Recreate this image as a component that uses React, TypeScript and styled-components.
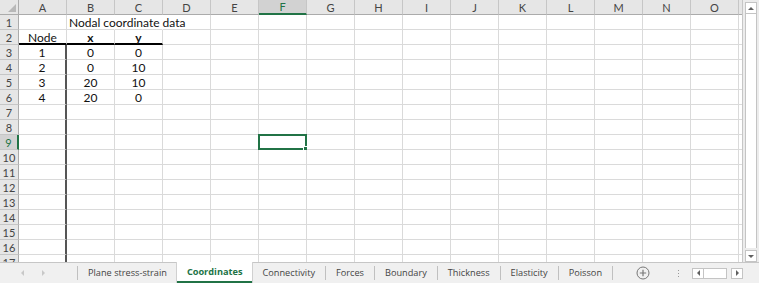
import React from "react";
import styled, { createGlobalStyle, css } from "styled-components";

const GREEN = "#217346";
const COLS = ["A", "B", "C", "D", "E", "F", "G", "H", "I", "J", "K", "L", "M", "N", "O", "P"];
const ROWS = Array.from({ length: 17 }, (_, i) => i + 1);

type CellData = { text: string; align?: "left" | "center"; bold?: boolean };
const DATA: Record<string, CellData> = {
  B1: { text: "Nodal coordinate data", align: "left" },
  A2: { text: "Node" },
  B2: { text: "x", bold: true },
  C2: { text: "y", bold: true },
  A3: { text: "1" }, B3: { text: "0" }, C3: { text: "0" },
  A4: { text: "2" }, B4: { text: "0" }, C4: { text: "10" },
  A5: { text: "3" }, B5: { text: "20" }, C5: { text: "10" },
  A6: { text: "4" }, B6: { text: "20" }, C6: { text: "0" },
};

const TABS = ["Plane stress-strain", "Coordinates", "Connectivity", "Forces", "Boundary", "Thickness", "Elasticity", "Poisson"];
const ACTIVE_TAB = 1;

const Global = createGlobalStyle`
  html, body { margin: 0; padding: 0; background: #fff; }
  body { width: 759px; height: 283px; overflow: hidden; }
  * { box-sizing: border-box; }
`;

const Window = styled.div`
  width: 759px;
  height: 283px;
  display: flex;
  flex-direction: column;
  overflow: hidden;
  background: #fff;
`;

const Main = styled.div`
  display: flex;
  height: 262px;
`;

const Sheet = styled.div`
  width: 743px;
  height: 262px;
  overflow: hidden;
  border-right: 1px solid #c6c6c6;
`;

const Grid = styled.div`
  display: grid;
  grid-template-columns: 19px repeat(16, 48px);
  grid-auto-rows: 15px;
  font-family: Lato, "Liberation Sans", sans-serif;
  font-size: 12px;
  color: #111;
`;

const Corner = styled.div`
  background: #e6e6e6;
  border-right: 1px solid #ababab;
  border-bottom: 1px solid #ababab;
  display: flex;
  align-items: flex-end;
  justify-content: flex-end;
  padding: 0 2px 2px 0;
`;

const ColHeader = styled.div<{ $active?: boolean }>`
  background: ${(p) => (p.$active ? "#d2d2d2" : "#e6e6e6")};
  color: ${(p) => (p.$active ? GREEN : "#444")};
  border-right: 1px solid #c6c6c6;
  border-bottom: ${(p) => (p.$active ? `2px solid ${GREEN}` : "1px solid #ababab")};
  display: flex;
  align-items: center;
  justify-content: center;
  font-size: 11px;
  line-height: 1;
`;

const RowHeader = styled.div<{ $active?: boolean }>`
  background: ${(p) => (p.$active ? "#d2d2d2" : "#e6e6e6")};
  color: ${(p) => (p.$active ? GREEN : "#444")};
  border-right: ${(p) => (p.$active ? `2px solid ${GREEN}` : "1px solid #ababab")};
  border-bottom: 1px solid #c6c6c6;
  display: flex;
  align-items: center;
  justify-content: center;
  padding-top: 1px;
  font-size: 11px;
  line-height: 1;
`;

const Cell = styled.div<{
  $align?: "left" | "center";
  $bold?: boolean;
  $thickBottom?: boolean;
  $thickRight?: boolean;
  $hideRight?: boolean;
}>`
  position: relative;
  border-right: 1px solid ${(p) => (p.$hideRight ? "transparent" : "#dadada")};
  border-bottom: 1px solid #dadada;
  display: flex;
  align-items: center;
  justify-content: ${(p) => (p.$align === "left" ? "flex-start" : "center")};
  padding: 1px 2px 0;
  white-space: nowrap;
  overflow: visible;
  line-height: 1;
  font-weight: ${(p) => (p.$bold ? 700 : 400)};
  ${(p) =>
    p.$thickBottom &&
    css`
      border-bottom: 2px solid #000;
      padding-top: 2px;
    `}
  ${(p) =>
    p.$thickRight &&
    css`
      border-right: 2px solid #555;
    `}
`;

const Selection = styled.div`
  position: absolute;
  top: -1px;
  left: -1px;
  right: -1px;
  bottom: -1px;
  border: 2px solid ${GREEN};
  pointer-events: none;
`;

const Handle = styled.div`
  position: absolute;
  right: -3px;
  bottom: -3px;
  width: 5px;
  height: 5px;
  background: ${GREEN};
  border: 1px solid #fff;
`;

const VScroll = styled.div`
  width: 16px;
  height: 262px;
  background: #ececec;
  display: flex;
  flex-direction: column;
  padding: 2px 2px 0 2px;
`;

const ScrollButton = styled.div`
  height: 12px;
  background: #fff;
  border: 1px solid #c4c4c4;
  display: flex;
  align-items: center;
  justify-content: center;
`;

const VTrack = styled.div`
  flex: 1;
  background: #fff;
  border-left: 1px solid #c4c4c4;
  border-right: 1px solid #c4c4c4;
  margin-bottom: 2px;
`;

const TabBar = styled.div`
  height: 21px;
  display: flex;
  align-items: stretch;
  background: #f0f0f0;
  border-top: 1px solid #c6c6c6;
  font-family: "Segoe UI", "Open Sans", "Noto Sans", sans-serif;
  font-size: 9.2px;
  color: #444;
`;

const NavArea = styled.div`
  width: 77px;
  display: flex;
  align-items: center;
  padding-left: 20px;
  gap: 16px;
`;

const Separator = styled.div`
  width: 1px;
  height: 14px;
  align-self: center;
  background: #c0c0c0;
`;

const Tab = styled.div<{ $active?: boolean }>`
  display: flex;
  align-items: center;
  padding: 0 10px 1px;
  white-space: nowrap;
  ${(p) =>
    p.$active &&
    css`
      background: #fff;
      color: ${GREEN};
      font-weight: 700;
      border-bottom: 2px solid ${GREEN};
      padding: 0 10px 0;
      margin-top: -1px;
      box-shadow: 1px 0 0 #d0d0d0, -1px 0 0 #d0d0d0;
    `}
`;

const AddButton = styled.div`
  margin-left: 23px;
  display: flex;
  align-items: center;
`;

const Dots = styled.div`
  margin-left: 28px;
  display: flex;
  flex-direction: column;
  justify-content: center;
  gap: 2px;
  span {
    width: 1px;
    height: 1px;
    background: #999;
  }
`;

const HScroll = styled.div`
  margin-left: 13px;
  display: flex;
  align-items: center;
`;

const HButton = styled.div`
  width: 12px;
  height: 11px;
  background: #fff;
  border: 1px solid #c4c4c4;
  display: flex;
  align-items: center;
  justify-content: center;
`;

const HTrack = styled.div`
  width: 23px;
  height: 11px;
  background: #fff;
  border-top: 1px solid #c4c4c4;
  border-bottom: 1px solid #c4c4c4;
  border-right: 1px solid #c4c4c4;
  margin-right: 4px;
`;

const Tri = ({ dir, color = "#606060", size = 5 }: { dir: "up" | "down" | "left" | "right"; color?: string; size?: number }) => {
  const pts = {
    up: "0,4 3,1 6,4",
    down: "0,1 3,4 6,1",
    left: "4,0 1,3 4,6",
    right: "1,0 4,3 1,6",
  }[dir];
  const w = dir === "up" || dir === "down" ? 6 : 5;
  const h = dir === "up" || dir === "down" ? 5 : 6;
  return (
    <svg width={w * (size / 5)} height={h * (size / 5)} viewBox={`0 0 ${w} ${h}`}>
      <polygon points={pts} fill={color} />
    </svg>
  );
};

export default function App() {
  const cells: React.ReactNode[] = [];
  cells.push(
    <Corner key="corner">
      <svg width="8" height="8" viewBox="0 0 8 8">
        <polygon points="8,0 8,8 0,8" fill="#b8b8b8" />
      </svg>
    </Corner>
  );
  COLS.forEach((c) =>
    cells.push(
      <ColHeader key={`h${c}`} $active={c === "F"}>
        {c}
      </ColHeader>
    )
  );
  ROWS.forEach((r) => {
    cells.push(
      <RowHeader key={`r${r}`} $active={r === 9}>
        {r}
      </RowHeader>
    );
    COLS.forEach((c, ci) => {
      const id = `${c}${r}`;
      const d = DATA[id];
      cells.push(
        <Cell
          key={id}
          $align={d?.align}
          $bold={d?.bold}
          $thickBottom={r === 2 && ci <= 2}
          $thickRight={c === "A" && r >= 3}
          $hideRight={r === 1 && (c === "B" || c === "C")}
        >
          {d?.text}
          {id === "F9" && (
            <Selection>
              <Handle />
            </Selection>
          )}
        </Cell>
      );
    });
  });

  return (
    <Window>
      <Global />
      <Main>
        <Sheet>
          <Grid>{cells}</Grid>
        </Sheet>
        <VScroll>
          <ScrollButton>
            <Tri dir="up" />
          </ScrollButton>
          <VTrack />
          <ScrollButton>
            <Tri dir="down" />
          </ScrollButton>
        </VScroll>
      </Main>
      <TabBar>
        <NavArea>
          <Tri dir="left" color="#c8c8c8" />
          <Tri dir="right" color="#c8c8c8" />
        </NavArea>
        {TABS.map((t, i) => {
          const showSep = i !== ACTIVE_TAB && i !== ACTIVE_TAB + 1;
          return (
            <React.Fragment key={t}>
              {showSep && <Separator />}
              <Tab $active={i === ACTIVE_TAB}>{t}</Tab>
            </React.Fragment>
          );
        })}
        <Separator />
        <AddButton>
          <svg width="14" height="14" viewBox="0 0 14 14">
            <circle cx="7" cy="7" r="6" fill="none" stroke="#777" strokeWidth="1" />
            <path d="M7 3.8v6.4M3.8 7h6.4" stroke="#777" strokeWidth="1.2" />
          </svg>
        </AddButton>
        <Dots>
          <span />
          <span />
          <span />
        </Dots>
        <HScroll>
          <HButton>
            <Tri dir="left" />
          </HButton>
          <HTrack />
          <HButton>
            <Tri dir="right" />
          </HButton>
        </HScroll>
      </TabBar>
    </Window>
  );
}
